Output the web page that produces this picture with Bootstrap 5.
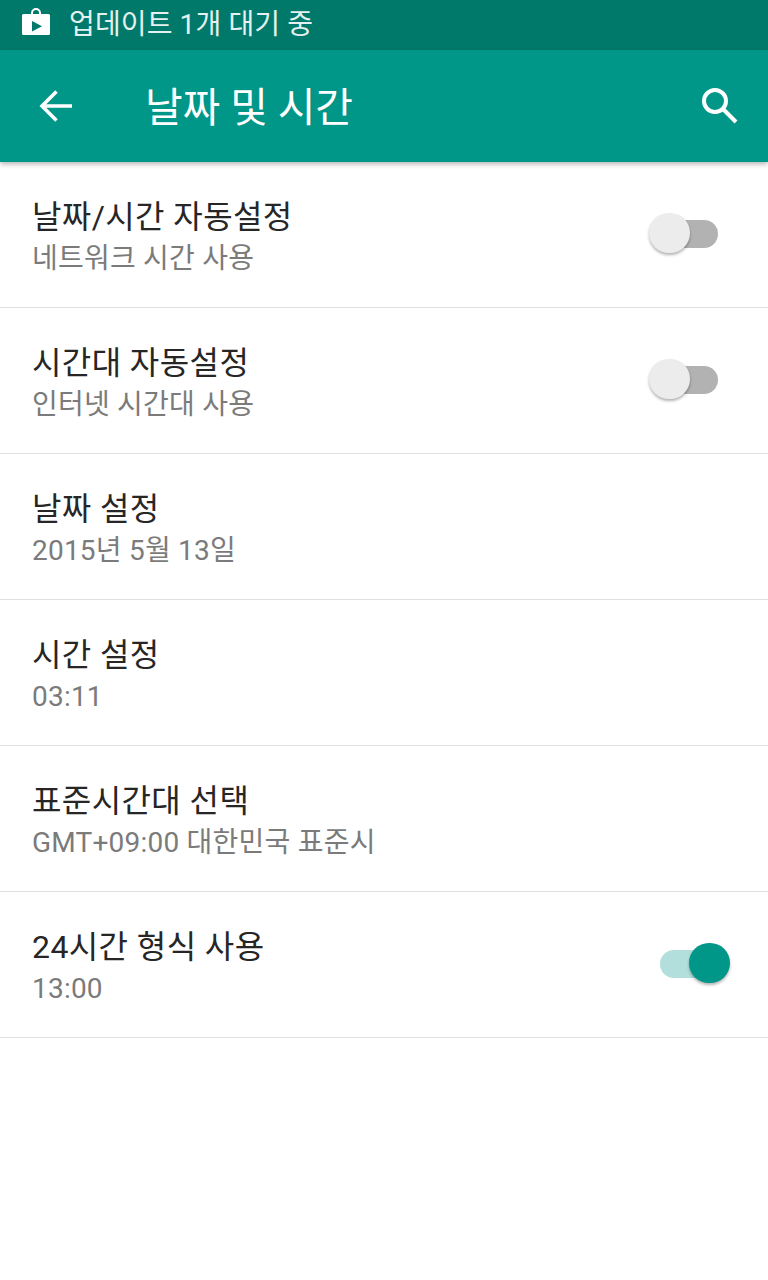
<!DOCTYPE html>
<html lang="ko">
<head>
  <meta charset="UTF-8" />
  <meta name="viewport" content="width=device-width, initial-scale=1.0"/>
  <title>날짜 및 시간</title>
  <link href="https://cdn.jsdelivr.net/npm/bootstrap@5.3.2/dist/css/bootstrap.min.css" rel="stylesheet"/>
  <style>
    body {
      background: #fff;
      font-family: Roboto, "Noto Sans CJK KR", sans-serif;
      height: 1280px;
      overflow: hidden;
    }
    .status-strip {
      height: 50px;
      background: #00796b;
      color: #e4f1ef;
      font-size: 28px;
      line-height: 1;
      letter-spacing: 0.12px;
      padding-left: 22px;
      gap: 19px;
    }
    .bag-icon {
      margin-top: -7px;
    }
    .app-toolbar {
      height: 112px;
      background: #009688;
      color: #fff;
      box-shadow: 0 2px 5px rgba(0, 0, 0, 0.3);
      padding: 0 28px 0 36px;
      position: relative;
      z-index: 2;
    }
    .app-title {
      font-size: 41px;
      line-height: 1;
      letter-spacing: -0.15px;
      margin-left: 69px;
      margin-top: 5px;
    }
    .setting-row {
      height: 146px;
      padding: 0 50px 0 32px;
      border-color: #e0e0e0;
    }
    .setting-text {
      padding-top: 7px;
    }
    .setting-title {
      font-size: 32px;
      line-height: 40px;
      letter-spacing: 0.4px;
      color: #262626;
    }
    .setting-sub {
      font-size: 28px;
      line-height: 40px;
      letter-spacing: 0.22px;
      margin-top: 2px;
      color: #7b7b7b;
    }
    .toggle-box {
      position: relative;
      width: 58px;
      height: 28px;
      border-radius: 14px;
      background: #b2b2b2;
      margin-top: -2px;
    }
    .toggle-knob {
      position: absolute;
      top: -7px;
      left: -11px;
      width: 40.5px;
      height: 40.5px;
      border-radius: 50%;
      background: #ececec;
      box-shadow: 0 2px 3px rgba(0, 0, 0, 0.3);
    }
    .toggle-box.is-on {
      background: #b2dfdb;
    }
    .toggle-box.is-on .toggle-knob {
      left: 29px;
      background: #009688;
    }
  </style>
</head>
<body>

  <!-- Status bar -->
  <div class="status-strip d-flex align-items-center">
    <svg class="bag-icon" width="28" height="27" viewBox="0 0 28 27" fill="#fff">
      <path fill-rule="evenodd" d="M1.500 6H9V5a5 5 0 0 1 5-5h0a5 5 0 0 1 5 5v1h7.500A1.500 1.500 0 0 1 28 7.500v18a1.500 1.500 0 0 1-1.500 1.500h-25A1.500 1.500 0 0 1 0 25.500v-18A1.500 1.500 0 0 1 1.500 6zM11 6h6V5a3 3 0 0 0-3-3h0a3 3 0 0 0-3 3zM10 13v10.500l10-5.250z"/>
    </svg>
    <span>업데이트 1개 대기 중</span>
  </div>

  <!-- Toolbar -->
  <div class="app-toolbar d-flex align-items-center">
    <svg width="40" height="40" viewBox="0 0 40 40" fill="none" stroke="#fff" stroke-width="3.600">
      <path d="M36 20H6.500M20.500 5.500L6 20l14.500 14.500"/>
    </svg>
    <div class="app-title flex-grow-1">날짜 및 시간</div>
    <svg width="40" height="40" viewBox="0 0 40 40" fill="none" stroke="#fff" stroke-width="4">
      <circle cx="15" cy="15" r="11"/>
      <path d="M23 23L36 36"/>
    </svg>
  </div>

  <!-- Settings -->
  <div class="list-group list-group-flush">
    <div class="list-group-item setting-row d-flex align-items-center justify-content-between">
      <div class="setting-text">
        <div class="setting-title">날짜/시간 자동설정</div>
        <div class="setting-sub">네트워크 시간 사용</div>
      </div>
      <div class="toggle-box"><div class="toggle-knob"></div></div>
    </div>
    <div class="list-group-item setting-row d-flex align-items-center justify-content-between">
      <div class="setting-text">
        <div class="setting-title">시간대 자동설정</div>
        <div class="setting-sub">인터넷 시간대 사용</div>
      </div>
      <div class="toggle-box"><div class="toggle-knob"></div></div>
    </div>
    <div class="list-group-item setting-row d-flex align-items-center">
      <div class="setting-text">
        <div class="setting-title">날짜 설정</div>
        <div class="setting-sub">2015년 5월 13일</div>
      </div>
    </div>
    <div class="list-group-item setting-row d-flex align-items-center">
      <div class="setting-text">
        <div class="setting-title">시간 설정</div>
        <div class="setting-sub">03:11</div>
      </div>
    </div>
    <div class="list-group-item setting-row d-flex align-items-center">
      <div class="setting-text">
        <div class="setting-title">표준시간대 선택</div>
        <div class="setting-sub">GMT+09:00 대한민국 표준시</div>
      </div>
    </div>
    <div class="list-group-item setting-row d-flex align-items-center justify-content-between">
      <div class="setting-text">
        <div class="setting-title">24시간 형식 사용</div>
        <div class="setting-sub">13:00</div>
      </div>
      <div class="toggle-box is-on"><div class="toggle-knob"></div></div>
    </div>
    <div class="list-group-item p-0"></div>
  </div>

  <script src="https://cdn.jsdelivr.net/npm/bootstrap@5.3.2/dist/js/bootstrap.bundle.min.js"></script>
</body>
</html>
